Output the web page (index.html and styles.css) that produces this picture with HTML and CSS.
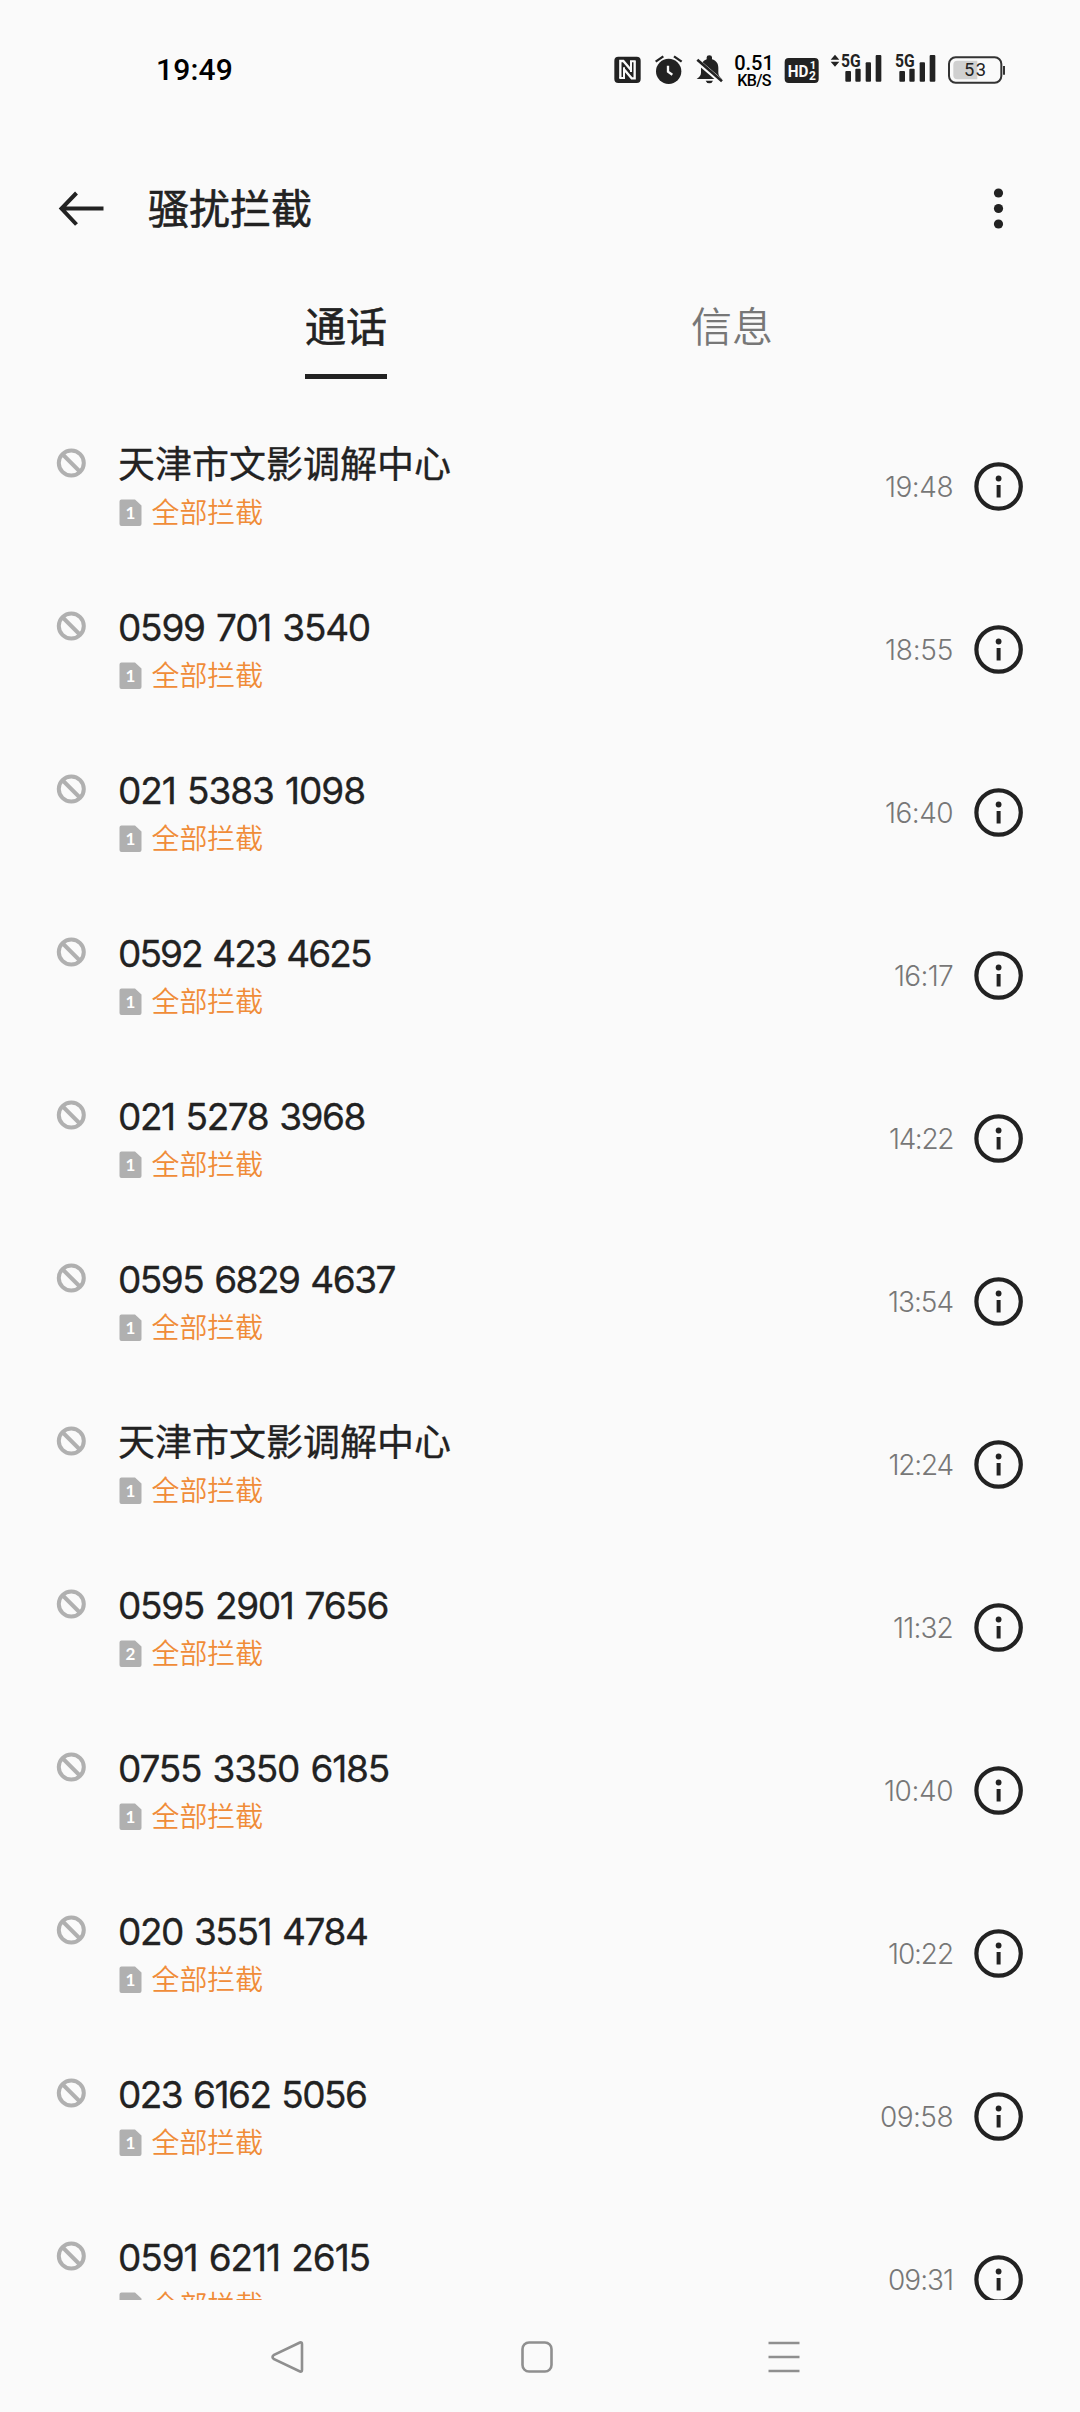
FILE: index.html
```html
<!DOCTYPE html>
<html lang="zh-CN">
<head>
<meta charset="utf-8">
<title>骚扰拦截</title>
<link rel="stylesheet" href="styles.css">
</head>
<body>
<svg class="defs" width="0" height="0">
  <symbol id="ban" viewBox="0 0 30 30"><circle cx="15.300" cy="15" r="12.500"/><path d="M6.300 6l18 18"/></symbol>
  <symbol id="sim" viewBox="0 0 23 28"><path d="M2.500 .5H16l6.500 6V25a2 2 0 0 1-2 2h-18a2 2 0 0 1-2-2V2.500a2 2 0 0 1 2-2z"/></symbol>
  <symbol id="info" viewBox="0 0 50 50"><circle cx="24.600" cy="24.500" r="22.200" fill="none" stroke="#222" stroke-width="4.200"/><circle cx="24.600" cy="16.500" r="2.900"/><path d="M22.600 23h4v12.500h-4z"/></symbol>
</svg>
<header class="status">
  <span class="clock">19:49</span>
  <div class="indicators">
    <svg width="47" height="60" viewBox="0 0 141 180"><rect x="43" y="50" width="79" height="79" rx="12" fill="#222"/><path d="M61 114V63h9l23 27M104 64v51h-9L72 88" fill="none" stroke="#fafafa" stroke-width="7"/><path d="M72 82v32H58M93 96V64h14" fill="none" stroke="#fafafa" stroke-width="6"/></svg>
    <svg width="40" height="60" viewBox="141 0 120 180"><circle cx="206" cy="94" r="38" fill="#222"/><path d="M167 65l23-16M222 49l23 16" stroke="#222" stroke-width="7"/><path d="M204 77v18l13 9" fill="none" stroke="#fafafa" stroke-width="7"/></svg>
    <svg width="42" height="60" viewBox="261 0 126 180"><path d="M290 117c9-7 13-11 13-19V82c0-12 6-20 17-24v-6q0-6 8-6t8 6v6c13 4 19 13 19 25v15c0 8 4 12 11 19zM317 122h22q-3 8-11 8t-11-8z" fill="#222"/><path d="M288 60l75 64" stroke="#fafafa" stroke-width="15"/><path d="M292 59l74 65" stroke="#222" stroke-width="8"/></svg>
    <div class="speed"><span class="rate">0.51</span><span class="unit">KB/S</span></div>
    <svg width="48" height="60" viewBox="531 0 144 180"><rect x="554" y="54" width="102" height="75" rx="12" fill="#222"/><g fill="#fafafa" font-family="Roboto, sans-serif" font-weight="700"><text x="563" y="111" font-size="52" textLength="62" lengthAdjust="spacingAndGlyphs">HD</text><text x="629" y="88" font-size="34">1</text><text x="627" y="119" font-size="36">2</text></g></svg>
    <svg width="64" height="60" viewBox="675 0 192 180"><g fill="#222"><path d="M692 59l13-15 13 15zM692 65h26l-13 15z"/><rect x="736" y="93" width="17" height="32" rx="3"/><rect x="766" y="86" width="16" height="39" rx="3"/><rect x="797" y="67" width="16" height="58" rx="3"/><rect x="827" y="45" width="17" height="80" rx="3"/><text x="723" y="80" font-family="Roboto, sans-serif" font-weight="700" font-size="53" textLength="59" lengthAdjust="spacingAndGlyphs">5G</text></g></svg>
    <svg width="53" height="60" viewBox="867 0 159 180"><g fill="#222"><rect x="898" y="93" width="17" height="32" rx="3"/><rect x="928" y="86" width="16" height="39" rx="3"/><rect x="959" y="67" width="16" height="58" rx="3"/><rect x="989" y="45" width="17" height="80" rx="3"/><text x="885" y="80" font-family="Roboto, sans-serif" font-weight="700" font-size="53" textLength="59" lengthAdjust="spacingAndGlyphs">5G</text></g></svg>
    <svg width="78" height="60" viewBox="1026 0 234 180"><path d="M1072 62h60v56h-60q-12 0-12-12V74q0-12 12-12z" fill="#d0d0d0"/><rect x="1047" y="52" width="157" height="76" rx="20" fill="none" stroke="#333" stroke-width="6"/><path d="M1212 78v26" stroke="#333" stroke-width="6"/><text x="1092" y="109" font-family="Roboto, sans-serif" font-size="55" textLength="66" fill="#222">53</text></svg>
  </div>
</header>
<div class="appbar">
  <svg class="back" width="46" height="40" viewBox="0 0 46 40"><path d="M18.500 4L3.500 19.500l15 16M3.500 19.500h42" fill="none" stroke="#222" stroke-width="4"/></svg>
  <h1>骚扰拦截</h1>
  <svg class="more" width="12" height="44" viewBox="0 0 12 44" fill="#222"><circle cx="5.500" cy="6" r="4.600"/><circle cx="5.500" cy="21.500" r="4.600"/><circle cx="5.500" cy="37" r="4.600"/></svg>
</div>
<nav class="tabs"><a class="tab active">通话</a><a class="tab">信息</a></nav>
<main class="list" id="list"></main>
<footer class="navbar">
  <svg width="34" height="34" viewBox="0 0 34 34"><path d="M30 2.500L3.600 15.200q-2.200 1.800 0 3.600L30 31.500q2 .5 2-1.500V4q0-2-2-1.500z"/></svg>
  <svg width="34" height="34" viewBox="0 0 34 34"><rect x="2.500" y="2.500" width="29" height="29" rx="6.500"/></svg>
  <svg width="34" height="34" viewBox="0 0 34 34"><path d="M1.500 3h31M1.500 17h31M1.500 31h31"/></svg>
</footer>
<script src="app.js"></script>
</body>
</html>
```
FILE: styles.css
```css
* { box-sizing: border-box; }
body { margin: 0; width: 1080px; height: 2412px; overflow: hidden; display: flex; flex-direction: column; background: #fafafa; color: #222; font-family: Inter, "Noto Sans CJK SC", sans-serif; }
.defs { position: absolute; }
.status { height: 140px; display: flex; justify-content: space-between; padding: 40px 60px 0 156px; }
.clock { font: 500 30px/60px Roboto, sans-serif; letter-spacing: 0.2px; color: #000; }
.indicators { display: flex; height: 60px; }
.speed { width: 48px; padding: 15px 0 0 2px; display: flex; flex-direction: column; align-items: center; color: #000; font-family: Roboto, sans-serif; font-weight: 500; white-space: nowrap; }
.rate { font-size: 20px; line-height: 17px; }
.unit { font-size: 16px; line-height: 17px; letter-spacing: -0.6px; }
.appbar { height: 138px; display: flex; align-items: center; padding: 0 75px 0 58px; }
.appbar h1 { margin: 0 auto 0 44px; font-size: 41px; line-height: 60px; font-weight: 400; -webkit-text-stroke: 0.6px #222; }
.tabs { height: 127px; display: flex; padding: 16px 0 0 305px; gap: 304px; }
.tab { width: 82px; height: 85px; font-size: 41px; line-height: 66px; color: #777; font-weight: 350; white-space: nowrap; }
.active { color: #222; font-weight: 400; -webkit-text-stroke: 0.6px #222; border-bottom: 5px solid #222; }
.list { height: 1895px; overflow: hidden; }
.row { height: 163px; display: flex; align-items: center; padding: 0 56px; }
.ban { width: 30px; height: 30px; margin-bottom: 47px; fill: none; stroke: #b0b0b0; stroke-width: 4; }
.entry { margin-left: 33px; display: flex; flex-direction: column; align-items: flex-start; flex: 1; }
.number { margin-left: -1px; font-size: 37px; line-height: 52px; word-spacing: 2px; white-space: pre; -webkit-text-stroke: 0.3px #222; }
.name { font-size: 37px; word-spacing: 0; }
.tag { display: flex; align-items: center; gap: 9.5px; height: 44px; font-size: 27.9px; line-height: 44px; font-weight: 350; color: #f08c38; }
.sim { position: relative; width: 23px; height: 28px; }
.sim svg { display: block; fill: #b0b0b0; }
.slot { position: absolute; inset: 0; color: #fff; font: 700 17px/28px Lato, sans-serif; text-align: center; }
.time { font-size: 28px; font-weight: 300; color: #777; margin-right: 21px; }
.info { width: 50px; height: 50px; fill: #222; }
.navbar { height: 112px; display: grid; grid-template-columns: 249.5px 247px 34px; padding: 40px 0 0 270px; }
.navbar svg { fill: none; stroke: #8f8f8f; stroke-width: 2.6; }
```
FILE: app.js
```js
// Caller, time, SIM slot, caller text width, time text width
const calls = [
  ["天津市文影调解中心", "19:48", 1, 0, 68],
  ["0599 701 3540", "18:55", 1, 252, 68],
  ["021 5383 1098", "16:40", 1, 247, 68],
  ["0592 423 4625", "16:17", 1, 252.5, 59],
  ["021 5278 3968", "14:22", 1, 247, 64],
  ["0595 6829 4637", "13:54", 1, 277, 65],
  ["天津市文影调解中心", "12:24", 1, 0, 64.5],
  ["0595 2901 7656", "11:32", 2, 270, 60],
  ["0755 3350 6185", "10:40", 1, 271, 69],
  ["020 3551 4784", "10:22", 1, 249.5, 65],
  ["023 6162 5056", "09:58", 1, 248.5, 73],
  ["0591 6211 2615", "09:31", 1, 252, 65]
];
document.getElementById("list").innerHTML = calls.map(([who, time, slot, w, tw]) => `
  <div class="row">
    <svg class="ban"><use href="#ban"/></svg>
    <div class="entry">
      <span class="number${w ? "" : " name"}" data-width="${w}">${who}</span>
      <span class="tag"><span class="sim"><svg width="23" height="28"><use href="#sim"/></svg><span class="slot">${slot}</span></span>全部拦截</span>
    </div>
    <span class="time" data-width="${tw}">${time}</span>
    <svg class="info"><use href="#info"/></svg>
  </div>`).join("");
// Spread each text's letters to its own width
document.querySelectorAll("[data-width]").forEach(el => {
  const width = Number(el.dataset.width);
  if (width) el.style.letterSpacing = (width - el.getBoundingClientRect().width) / el.textContent.length + "px";
});
```
